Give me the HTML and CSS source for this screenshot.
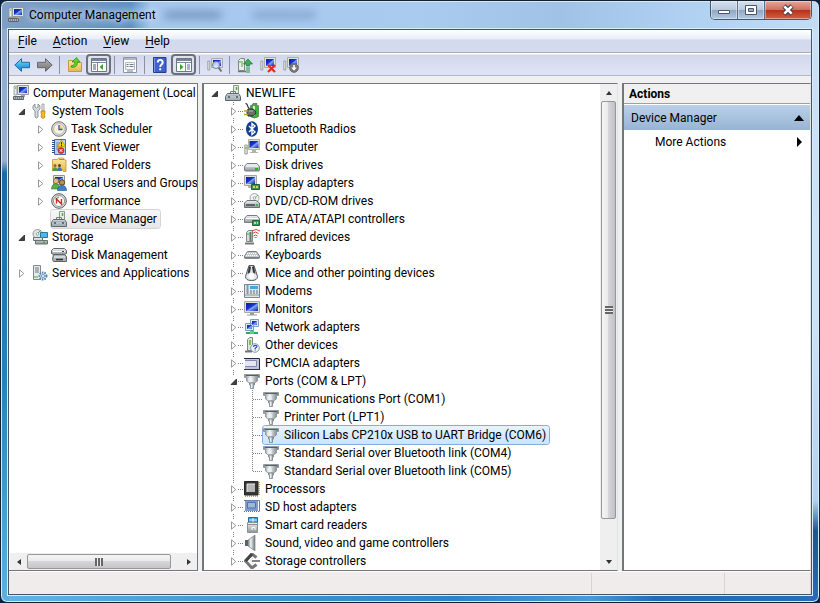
FILE: index.html
```
<!DOCTYPE html>
<html lang="en">
<head>
<meta charset="utf-8">
<title>Computer Management</title>
<link rel="stylesheet" href="styles.css">
</head>
<body>
<svg class="defs" aria-hidden="true">
  <defs>
    <linearGradient id="g-screen" x1="0" y1="0" x2="1" y2="1"><stop offset="0" stop-color="#0a1a9c"/><stop offset=".45" stop-color="#1a35d0"/><stop offset=".55" stop-color="#7fa6f4"/><stop offset="1" stop-color="#1020a8"/></linearGradient>
    <linearGradient id="g-metal" x1="0" y1="0" x2="0" y2="1"><stop offset="0" stop-color="#f4f5f6"/><stop offset="1" stop-color="#8d9499"/></linearGradient>
    <linearGradient id="g-side" x1="0" y1="0" x2="1" y2="0"><stop offset="0" stop-color="#7d878d"/><stop offset=".4" stop-color="#eef2f4"/><stop offset="1" stop-color="#6b757b"/></linearGradient>
    <linearGradient id="g-blue" x1="0" y1="0" x2="0" y2="1"><stop offset="0" stop-color="#9be0fb"/><stop offset=".5" stop-color="#38aeea"/><stop offset="1" stop-color="#1784cc"/></linearGradient>
    <linearGradient id="g-gray" x1="0" y1="0" x2="0" y2="1"><stop offset="0" stop-color="#b5b5b5"/><stop offset="1" stop-color="#6f6f6f"/></linearGradient>
    <linearGradient id="g-gold" x1="0" y1="0" x2="0" y2="1"><stop offset="0" stop-color="#fdeaa4"/><stop offset="1" stop-color="#e5b548"/></linearGradient>
  </defs>
  <symbol id="shut" viewBox="0 0 9 9"><path d="M2.5.8v7.4L6.8 4.5z" fill="#fff" stroke="#9a9a9a"/></symbol>
  <symbol id="open" viewBox="0 0 9 9"><path d="M7.5 2v5.500H2z" fill="#404040" stroke="#222" stroke-width=".8"/></symbol>

  <symbol id="pc" viewBox="0 0 16 16"><path d="M1 1h3v9H1z" fill="#e6e9df" stroke="#8b9090" stroke-width=".7"/><path d="M2 3h1" stroke="#39a42d"/><path d="M4.500.5h11v9h-11z" fill="#e4e4dc" stroke="#9a9a94"/><path d="M6 2h8v6H6z" fill="url(#g-screen)"/><path d="M8 10h4v2H8z" fill="#aaa"/><path d="M.5 11.500h10v3H.5z" fill="#aeb4b8" stroke="#5f676c"/><path d="M2 13h8" stroke="#41494e" stroke-dasharray="1 1"/></symbol>
  <symbol id="tools" viewBox="0 0 16 16"><path d="M3 1v3l1.500 1L6 4V1l2 2v3L6 8v6l-1.500 1L3 14V8L1 6V3z" fill="#d5dadd" stroke="#788087" stroke-width=".8"/><path d="M10 1h2v7h-2z" fill="#eef1f2" stroke="#888" stroke-width=".7"/><path d="M9 8h4v2l-.6 1 .6 3-2 1.500L9 14l.6-3L9 10z" fill="#f5b925" stroke="#c18100" stroke-width=".8"/></symbol>
  <symbol id="clock" viewBox="0 0 16 16"><circle cx="8" cy="8" r="7.300" fill="#d8dbd8" stroke="#6f7471"/><circle cx="8" cy="8" r="5.300" fill="#fbf3dd" stroke="#a9aca9" stroke-width=".7"/><path d="M8 8h4A4 4 0 0 0 8 4z" fill="#f1cf86"/><path d="M8 4v4.500h3.500" fill="none" stroke="#3b5c96" stroke-width="1.300"/></symbol>
  <symbol id="event" viewBox="0 0 16 16"><path d="M3.500.5h11v15h-11z" fill="#b9d1ee" stroke="#4570ab"/><path d="M2.500 1v14" stroke="#2e4f86" stroke-width="3" stroke-dasharray="1 1"/><path d="M5 4h4M5 6h3M5 8h3M5 10h2" stroke="#5f8dc8"/><path d="M10.500 1L14.500 7.500h-8z" fill="#ffd11c" stroke="#c08c00" stroke-width=".7"/><path d="M10.500 3.200v2.300M10.500 6v1" stroke="#222"/><circle cx="10" cy="11.500" r="3" fill="#dc3b32" stroke="#9d1d18" stroke-width=".6"/><path d="M8.700 10.200l2.600 2.600m0-2.600l-2.600 2.600" stroke="#fff"/></symbol>
  <symbol id="shared" viewBox="0 0 16 16"><path d="M1.500 14.500v-12h5l1-1.500h5l1 2h1.500v11.500z" fill="url(#g-gold)" stroke="#c79431" stroke-width=".8"/><path d="M8 2.500h5" stroke="#4c9bde"/><circle cx="4" cy="8.500" r="1.500" fill="#936838"/><circle cx="8.500" cy="8.500" r="1.500" fill="#5c4024"/><path d="M1.500 14c0-5 5-5 5 0z" fill="#47a045"/><path d="M6 14c0-5 5-5 5 0z" fill="#3777ba"/><path d="M1 14.500h11" stroke="#fff"/></symbol>
  <symbol id="users" viewBox="0 0 16 16"><path d="M2.500.5h11v9h-11z" fill="#e2e5df" stroke="#92958f"/><path d="M4 2h8v6H4z" fill="url(#g-screen)"/><circle cx="5" cy="6" r="2.700" fill="#e0b87e" stroke="#80562a" stroke-width=".7"/><circle cx="11" cy="7.500" r="2.700" fill="#c18d50" stroke="#523517" stroke-width=".8"/><path d="M.5 14c0-7 8-7 8.500 0z" fill="#58b04c" stroke="#33752d" stroke-width=".6"/><path d="M6.500 15.500c0-7 9-7 9 0z" fill="#3b81ca" stroke="#1f4f8b" stroke-width=".6"/></symbol>
  <symbol id="perf" viewBox="0 0 16 16"><circle cx="8" cy="8" r="7.300" fill="#e4e4e0" stroke="#555b5d"/><circle cx="8" cy="8" r="5.500" fill="#fff" stroke="#777" stroke-width=".8"/><path d="M5.500 10.500V6l5 5V6" fill="none" stroke="#d02822" stroke-width="1.400"/><path d="M4.500 6L8 4" stroke="#444" stroke-width=".8"/></symbol>
  <symbol id="device" viewBox="0 0 16 16"><path d="M8.500.5h5v9h-5z" fill="#e8eee4" stroke="#90988e"/><path d="M11.500 2v3" stroke="#43b332" stroke-width="1.500"/><path d="M5.500 9V6.500h5V9" fill="none" stroke="#727c81"/><path d="M2.500 8.500h11l2 3v4H.5v-4z" fill="#a9b4b9" stroke="#5d686d"/><path d="M2 9.500h12M1 12h14" stroke="#c3ccd0"/><path d="M4 11v2M12 11v2" stroke="#4b565c" stroke-width="1.500"/></symbol>
  <symbol id="storage" viewBox="0 0 16 16"><circle cx="5.500" cy="5" r="4.500" fill="#e0e6e6" stroke="#909896"/><path d="M5 5L9 1" stroke="#52b546"/><circle cx="5.500" cy="5" r="1.300" fill="#fff" stroke="#777" stroke-width=".6"/><path d="M8.500 3.500h7v5h-7z" fill="#4fb7e4" stroke="#237ba4"/><path d="M1.500 8.500h9v3h-9zM3.500 11.500h12v3.500h-12z" fill="url(#g-metal)" stroke="#697175"/><path d="M11 13.500h2" stroke="#37b52b" stroke-width="2"/></symbol>
  <symbol id="diskmgmt" viewBox="0 0 16 16"><path d="M2.500 1.500h11l2 2v3l-2 1h-11l-2-1v-3z" fill="url(#g-metal)" stroke="#666"/><path d="M2.500 7.500h11l2 2v5h-13l-1-2z" fill="#a9afb3" stroke="#5d6366"/><path d="M2 4.500h12M3 10h11" stroke="#fff"/><path d="M5 12.500h7" stroke="#333" stroke-width="1.500"/><path d="M11 4.500h2" stroke="#444"/></symbol>
  <symbol id="services" viewBox="0 0 16 16"><path d="M1.500.5h7v14h-7z" fill="#e7ebed" stroke="#7e888e"/><path d="M3 3h4M3 5h4M3 7h4" stroke="#6d777c"/><path d="M2 12h4" stroke="#3fae39"/><circle cx="11" cy="11" r="3.500" fill="#d3e7f6" stroke="#5382a6" stroke-width="2" stroke-dasharray="1.500 1"/><circle cx="11" cy="11" r="1.500" fill="#fff" stroke="#5382a6" stroke-width=".8"/></symbol>

  <symbol id="battery" viewBox="0 0 16 16"><path d="M8 1.500h5v-1H9zM6.500 2.500h8v11q-4 3-8 0z" fill="#38b53b" stroke="#51704f" stroke-width=".7"/><path d="M10 3v10" stroke="#c9f5bd" stroke-width="2"/><path d="M1.500.5c3 0 1 4 4 5" fill="none" stroke="#333" stroke-width="1.200"/><path d="M4 6h4c5 1 5 6 0 7H4L3 9.500z" fill="#6b706d" stroke="#252825"/><path d="M5 8h4" stroke="#b5bab7"/><path d="M0 8h4M0 11.500h4" stroke="#c89b22" stroke-width="1.600"/></symbol>
  <symbol id="bluetooth" viewBox="0 0 16 16"><ellipse cx="8" cy="8" rx="6" ry="7.700" fill="#123f91"/><path d="M5 5l6 6-3 2.500v-11L11 5l-6 6" fill="none" stroke="#fff" stroke-width="1.400"/></symbol>
  <symbol id="computer" viewBox="0 0 16 16"><path d="M.8 6h2.500v9H.8z" fill="#dfe7e0" stroke="#8a918d" stroke-width=".8"/><path d="M2 8v2" stroke="#39aa2e"/><path d="M4.500.5h11v10h-11z" fill="#e2e2da" stroke="#b1b1a9"/><path d="M5.500 2h9v7h-9z" fill="url(#g-screen)"/><path d="M8 11h4v2h2v1H6v-1h2z" fill="#b3b3ae"/></symbol>
  <symbol id="drive" viewBox="0 0 16 16"><path d="M3 6.500h10l2.500 3v3.500q0 1-1 1h-13q-1 0-1-1V9.500z" fill="url(#g-metal)" stroke="#777f83"/><path d="M2 9h12" stroke="#fff"/><path d="M11 12h3" stroke="#25b320" stroke-width="2"/></symbol>
  <symbol id="display" viewBox="0 0 16 16"><path d="M.5.500h12v10H.5z" fill="#e0e0da" stroke="#a6a6a0"/><path d="M2 2h9v7H2z" fill="url(#g-screen)"/><path d="M4 11h5v2H4z" fill="#b4b4b0"/><path d="M7.500 9.500h8v5h-8z" fill="#38995b" stroke="#20613a"/><path d="M9 11h2v2H9zM12 11h2v2h-2z" fill="#e5ca63"/></symbol>
  <symbol id="dvd" viewBox="0 0 16 16"><circle cx="10.500" cy="5" r="4.500" fill="#f2f3f3" stroke="#a5a9aa"/><path d="M10.500 5L14 2" stroke="#63bb64"/><circle cx="10.500" cy="5" r="1.300" fill="#fff" stroke="#888" stroke-width=".7"/><path d="M3 7.500h9l3.500 2.500v4.500H.5V10z" fill="url(#g-metal)" stroke="#697276"/><path d="M2 12h9" stroke="#444" stroke-width="1.500"/><path d="M12 12h2" stroke="#25b320" stroke-width="1.500"/></symbol>
  <symbol id="ide" viewBox="0 0 16 16"><path d="M3 4.500h10l2.500 3v4h-15v-4z" fill="url(#g-metal)" stroke="#777f83"/><path d="M2 7.500h12" stroke="#fff"/><path d="M8.500 9.500h7v5h-7z" fill="#3b9561" stroke="#216541"/><path d="M10 11h2v2h-2zM13 11h1v2h-1z" fill="#e1d27a"/></symbol>
  <symbol id="infrared" viewBox="0 0 16 16"><path d="M2.500 3.500l2-2h4v11h-6z" fill="#d8dfdb" stroke="#7e8782"/><path d="M6.500 3v9" stroke="#64766e" stroke-width="2"/><path d="M4 4v2" stroke="#3fae37"/><path d="M1 14.500h9" stroke="#777" stroke-width="2"/><path d="M8 2q4-3 8 0M8.500 4.500q3-3 6 0M9.500 7q2-2 4 0M10.500 9l1-1 1 1" fill="none" stroke="#d64a40"/></symbol>
  <symbol id="keyboard" viewBox="0 0 16 16"><path d="M3.500 4.500h9l3 4.500v2H.5V9z" fill="#c6c9ce" stroke="#777b83"/><path d="M3 6.500h10M2 8.500h12" stroke="#fff" stroke-dasharray="1 1"/><path d="M1 11h14" stroke="#555960"/></symbol>
  <symbol id="mouse" viewBox="0 0 16 16"><path d="M5 .5h5l3.500 11q0 4-6 4t-6-4z" fill="#e1e5e7" stroke="#535b61"/><path d="M5 1l-1.500 8L6 7.500 7 2zM10 1l1.500 8L9 7.500 8 2z" fill="#343a3e"/><circle cx="7.500" cy="11" r="3" fill="#fff"/></symbol>
  <symbol id="modem" viewBox="0 0 16 16"><path d="M.5 1.500h15v13H.5z" fill="#e2e5e8" stroke="#7c868e"/><path d="M3.500 2v9" stroke="#8d979f" stroke-width="2"/><path d="M6 3h8v3H6z" fill="#3ca8de"/><path d="M6 8h8M6 10h8" stroke="#526e83" stroke-dasharray="2 1"/><path d="M1 12h14" stroke="#89949c"/></symbol>
  <symbol id="monitor" viewBox="0 0 16 16"><path d="M.5.500h15v11H.5z" fill="#deded7" stroke="#aaa9a2"/><path d="M2 2h12v8H2z" fill="url(#g-screen)"/><path d="M6 12h4v1.500h3v1H3v-1h3z" fill="#9c9c97"/></symbol>
  <symbol id="network" viewBox="0 0 16 16"><path d="M6.500.5h8v7h-8zM1.500 4.500h8v7h-8z" fill="#e0eaf1" stroke="#829eb6"/><path d="M8 2h5v4H8zM3 6h5v4H3z" fill="url(#g-screen)"/><path d="M8 11v3M2 14h12" stroke="#2da469" stroke-width="2"/><path d="M6 12h4v3H6z" fill="#4cd693"/></symbol>
  <symbol id="other" viewBox="0 0 16 16"><path d="M3.500 2.500l2-2h3v13h-5z" fill="#dde5df" stroke="#7f8982"/><path d="M6 3v5" stroke="#49b93f" stroke-width="1.500"/><path d="M1 14.500h7" stroke="#777" stroke-width="2"/><circle cx="11" cy="11" r="4.300" fill="#eff3fa" stroke="#8b98ab"/><path d="M9.500 10q0-1.700 1.700-1.700 2 0 1.500 1.700l-1.500 1.200v.7m0 .7v1" fill="none" stroke="#2852ab" stroke-width="1.200"/></symbol>
  <symbol id="pcmcia" viewBox="0 0 16 16"><path d="M0 3.500h15.500v11" fill="none" stroke="#28283c"/><path d="M1 4h14v10H1z" fill="#c0c5dc"/><path d="M1 5.500h11.500v6H1" fill="#e4e7f3" stroke="#8389ac"/><path d="M0 14.500h16" stroke="#303047"/></symbol>
  <symbol id="port" viewBox="0 0 16 16"><path d="M.5 1.500h15v3h-2V8l-3 2h-5l-3-2V4.500h-2z" fill="url(#g-side)" stroke="#858e93" stroke-width=".8"/><path d="M2 2.500h12" stroke="#555f64"/><path d="M5 5v4M8 5v4" stroke="#f5f8fa"/><path d="M5.500 10h5v2h-1v3.500h-3V12h-1z" fill="url(#g-side)" stroke="#798388" stroke-width=".8"/></symbol>
  <symbol id="chip" viewBox="0 0 16 16"><path d="M15.200 1v14M1 15.200h14" stroke="#ac842b" stroke-dasharray="1 1"/><path d="M.5.500h13.500v13.500H.5z" fill="#363636" stroke="#262626"/><path d="M3 3h8v8H3z" fill="#b7b7b7"/><path d="M3 11V3h8" fill="none" stroke="#e7e7e7"/></symbol>
  <symbol id="sd" viewBox="0 0 16 16"><path d="M0 1.500h15.500v11" fill="none" stroke="#6281b0"/><path d="M1 2h13v10H1z" fill="#7e9dca"/><path d="M3.500 3.500h8v5.500h-8z" fill="#9db7dc" stroke="#4f73aa"/><path d="M0 12.500h15.500" stroke="#5474a4" stroke-dasharray="1 1"/></symbol>
  <symbol id="card" viewBox="0 0 16 16"><path d="M4.500.5h9v5h-9z" fill="#32a0dc" stroke="#1a70a5"/><path d="M9 1v4M5 3h8" stroke="#e3f6ff"/><path d="M3.500 5.500h10v10h-10z" fill="url(#g-metal)" stroke="#899297"/><path d="M8 13v-2.500h3V13" fill="none" stroke="#fff"/><path d="M4 7.500h9" stroke="#8a9499"/></symbol>
  <symbol id="sound" viewBox="0 0 16 16"><path d="M4 5l7-5v16l-7-5z" fill="url(#g-side)" stroke="#7f878b" stroke-width=".7"/><path d="M1 5h3v6H1z" fill="#59646a"/></symbol>
  <symbol id="storctl" viewBox="0 0 16 16"><path d="M12.500 4.500L8 1 1.500 8 8 15l4.500-3.500" fill="none" stroke="#777" stroke-width="3"/><path d="M8 1L1.500 8" stroke="#444" stroke-width="3"/><path d="M8 8h8" stroke="#838383" stroke-width="2"/><path d="M9 5L6.500 8 9 11" fill="none" stroke="#ddd"/></symbol>

  <symbol id="back" viewBox="0 0 16 16"><path d="M.8 8L7.500 1.700v3.600h8v5.400h-8v3.600z" fill="url(#g-blue)" stroke="#27699c"/></symbol>
  <symbol id="forward" viewBox="0 0 16 16"><path d="M15.200 8L8.500 1.700v3.600h-8v5.400h8v3.600z" fill="url(#g-gray)" stroke="#686868"/></symbol>
  <symbol id="up" viewBox="0 0 16 16"><path d="M1.500 14.500v-11h5l1 2h7v9z" fill="url(#g-gold)" stroke="#c49940"/><path d="M4 9c4-1 4-3 3.500-4H5l4.500-4.500L13 5h-2.500c0 5-4 6-6.500 5z" fill="#5dd12f" stroke="#268812" stroke-width=".7"/></symbol>
  <symbol id="console" viewBox="0 0 16 16"><path d="M.5 1.500h15v13H.5z" fill="#fff" stroke="#697689"/><path d="M1 3h14" stroke="#75849d" stroke-width="2"/><path d="M1 5.500h14M6.500 6v8" stroke="#7d8998"/><path d="M2 8h3M2 10h3M2 12h3" stroke="#475870"/><path d="M12 7v6L8.500 10z" fill="#35a52b"/></symbol>
  <symbol id="actions" viewBox="0 0 16 16"><path d="M.5 1.500h15v13H.5z" fill="#fff" stroke="#697689"/><path d="M1 3h14" stroke="#75849d" stroke-width="2"/><path d="M1 5.500h14M9.500 6v8" stroke="#7d8998"/><path d="M11 8h3M11 10h3M11 12h3" stroke="#3c73b7"/><path d="M4 7v6l3.500-3z" fill="#35a52b"/></symbol>
  <symbol id="props" viewBox="0 0 16 16"><path d="M1.500.5h13v15h-13z" fill="#fff" stroke="#8b949f"/><path d="M2 2h12" stroke="#aeb8c7" stroke-width="2"/><path d="M3.500 5.500h9v7h-9z" fill="#f7f7f7" stroke="#b4bac2"/><path d="M4.500 7.500h2M4.500 9.500h2M7.500 7.500h4M7.500 9.500h4M5 14h6" stroke="#6e7d90"/></symbol>
  <symbol id="help" viewBox="0 0 16 16"><path d="M1.500.5h12.500v15H1.500z" fill="#3f63ca" stroke="#263c8c"/><path d="M2.500 1v14" stroke="#7a98e7"/><path d="M5.700 5.500c0-3.500 5-3.500 5 0 0 2.200-2.500 2-2.500 4.500m0 1.300v2" fill="none" stroke="#fff" stroke-width="1.900"/></symbol>
  <symbol id="scan" viewBox="0 0 16 16"><path d="M.8 4h2v9h-2z" fill="#e1e5de" stroke="#858b87" stroke-width=".7"/><path d="M4.500 1.500h11v9h-11z" fill="#e4e4dc" stroke="#aaa"/><path d="M6 3h8v6H6z" fill="url(#g-screen)"/><circle cx="9" cy="8" r="3.500" fill="#dceefc" fill-opacity=".8" stroke="#758695"/><path d="M11.500 10.500l3 4" stroke="#6f7377" stroke-width="2"/></symbol>
  <symbol id="update" viewBox="0 0 16 16"><path d="M1.500 3.500l2-2h4v12h-6z" fill="#e9eee8" stroke="#7e8881"/><path d="M5 4v6M3 4v2" stroke="#4eaa45"/><path d="M1 14.500h8" stroke="#777" stroke-width="1.500"/><path d="M11 2l4.500 5h-3v2H9.500V7h-3z" fill="#3baf56" stroke="#177432" stroke-width=".7"/><path d="M9 11h4M9 13h4M9 15h4" stroke="#24934b"/></symbol>
  <symbol id="remove" viewBox="0 0 16 16"><path d="M.8 4h2v9h-2z" fill="#e1e5de" stroke="#858b87" stroke-width=".7"/><path d="M4.500.5h11v10h-11z" fill="#e4e4dc" stroke="#aaa"/><path d="M6 2h8v7H6z" fill="url(#g-screen)"/><path d="M8 8l7 7m0-7l-7 7" stroke="#e02b20" stroke-width="2.200"/></symbol>
  <symbol id="disable" viewBox="0 0 16 16"><path d="M.8 4h2v9h-2z" fill="#e1e5de" stroke="#858b87" stroke-width=".7"/><path d="M4.500.5h11v10h-11z" fill="#e4e4dc" stroke="#aaa"/><path d="M6 2h8v7H6z" fill="url(#g-screen)"/><circle cx="11" cy="11" r="4.400" fill="#777" stroke="#666" stroke-width=".8"/><path d="M10.200 8h1.600v2.500h2L11 13.800 8.200 10.500h2z" fill="#fff"/></symbol>
</svg>

<div class="window">
  <header class="titlebar">
    <svg class="icon"><use href="#pc"/></svg>
    <h1 class="title">Computer Management</h1>
    <span class="ghost" aria-hidden="true"><i class="smudge smudge-a"></i><i class="smudge smudge-b"></i></span>
    <div class="controls">
      <button class="control" aria-label="Minimize"><svg class="glyph" viewBox="0 0 14 12"><path d="M1.500 6.500h11v3h-11z" fill="#fff" stroke="#4d5668"/></svg></button>
      <button class="control" aria-label="Maximize"><svg class="glyph" viewBox="0 0 14 12"><path d="M1.500 1.500h11v9h-11z" fill="#fff" stroke="#4d5668"/><path d="M4.500 4.500h5v3h-5z" fill="#93aecb" stroke="#4d5668"/></svg></button>
      <button class="control control-close" aria-label="Close"><svg class="glyph" viewBox="0 0 14 12"><path d="M3 2l8 8m0-8l-8 8" stroke="#4b3c4a" stroke-width="4.600"/><path d="M3.300 2.300l7.400 7.400m0-7.400l-7.400 7.400" stroke="#fff" stroke-width="2.600"/></svg></button>
    </div>
  </header>

  <div class="client">
    <nav class="menubar">
      <button class="menu"><u>F</u>ile</button>
      <button class="menu"><u>A</u>ction</button>
      <button class="menu"><u>V</u>iew</button>
      <button class="menu"><u>H</u>elp</button>
    </nav>
    <div class="toolbar">
      <button class="tool" aria-label="Back"><svg class="icon"><use href="#back"/></svg></button>
      <button class="tool" aria-label="Forward"><svg class="icon"><use href="#forward"/></svg></button>
      <span class="sep"></span>
      <button class="tool" aria-label="Up"><svg class="icon"><use href="#up"/></svg></button>
      <button class="tool tool-on" aria-label="Show console tree"><svg class="icon"><use href="#console"/></svg></button>
      <span class="sep"></span>
      <button class="tool" aria-label="Properties"><svg class="icon"><use href="#props"/></svg></button>
      <span class="sep"></span>
      <button class="tool" aria-label="Help"><svg class="icon"><use href="#help"/></svg></button>
      <button class="tool tool-on" aria-label="Show action pane"><svg class="icon"><use href="#actions"/></svg></button>
      <span class="sep"></span>
      <button class="tool" aria-label="Scan for hardware changes"><svg class="icon"><use href="#scan"/></svg></button>
      <span class="sep"></span>
      <button class="tool" aria-label="Update driver"><svg class="icon"><use href="#update"/></svg></button>
      <button class="tool" aria-label="Uninstall"><svg class="icon"><use href="#remove"/></svg></button>
      <button class="tool" aria-label="Disable"><svg class="icon"><use href="#disable"/></svg></button>
    </div>

    <main class="panes">
      <section class="pane pane-console">
        <ul class="tree console">
          <li>
            <div class="row"><svg class="icon"><use href="#pc"/></svg><span class="label">Computer Management (Local</span></div>
            <ul>
              <li>
                <div class="row"><button class="toggle" aria-label="Collapse"><svg class="arrow"><use href="#open"/></svg></button><svg class="icon"><use href="#tools"/></svg><span class="label">System Tools</span></div>
                <ul>
                  <li><div class="row"><button class="toggle" aria-label="Expand"><svg class="arrow"><use href="#shut"/></svg></button><svg class="icon"><use href="#clock"/></svg><span class="label">Task Scheduler</span></div></li>
                  <li><div class="row"><button class="toggle" aria-label="Expand"><svg class="arrow"><use href="#shut"/></svg></button><svg class="icon"><use href="#event"/></svg><span class="label">Event Viewer</span></div></li>
                  <li><div class="row"><button class="toggle" aria-label="Expand"><svg class="arrow"><use href="#shut"/></svg></button><svg class="icon"><use href="#shared"/></svg><span class="label">Shared Folders</span></div></li>
                  <li><div class="row"><button class="toggle" aria-label="Expand"><svg class="arrow"><use href="#shut"/></svg></button><svg class="icon"><use href="#users"/></svg><span class="label">Local Users and Groups</span></div></li>
                  <li><div class="row"><button class="toggle" aria-label="Expand"><svg class="arrow"><use href="#shut"/></svg></button><svg class="icon"><use href="#perf"/></svg><span class="label">Performance</span></div></li>
                  <li><div class="row"><span class="toggle"></span><span class="item item-idle"><svg class="icon"><use href="#device"/></svg><span class="label">Device Manager</span></span></div></li>
                </ul>
              </li>
              <li>
                <div class="row"><button class="toggle" aria-label="Collapse"><svg class="arrow"><use href="#open"/></svg></button><svg class="icon"><use href="#storage"/></svg><span class="label">Storage</span></div>
                <ul>
                  <li><div class="row"><span class="toggle"></span><svg class="icon"><use href="#diskmgmt"/></svg><span class="label">Disk Management</span></div></li>
                </ul>
              </li>
              <li><div class="row"><button class="toggle" aria-label="Expand"><svg class="arrow"><use href="#shut"/></svg></button><svg class="icon"><use href="#services"/></svg><span class="label">Services and Applications</span></div></li>
            </ul>
          </li>
        </ul>
        <div class="scroll scroll-x">
          <button class="nudge nudge-left" aria-label="Scroll left"></button>
          <div class="thumb"><i class="grip"></i></div>
          <button class="nudge nudge-right" aria-label="Scroll right"></button>
        </div>
      </section>

      <section class="pane pane-devices">
        <ul class="tree devices">
          <li>
            <div class="row"><button class="toggle" aria-label="Collapse"><svg class="arrow"><use href="#open"/></svg></button><svg class="icon"><use href="#device"/></svg><span class="label">NEWLIFE</span></div>
            <ul>
              <li><div class="row"><button class="toggle" aria-label="Expand"><svg class="arrow"><use href="#shut"/></svg></button><svg class="icon"><use href="#battery"/></svg><span class="label">Batteries</span></div></li>
              <li><div class="row"><button class="toggle" aria-label="Expand"><svg class="arrow"><use href="#shut"/></svg></button><svg class="icon"><use href="#bluetooth"/></svg><span class="label">Bluetooth Radios</span></div></li>
              <li><div class="row"><button class="toggle" aria-label="Expand"><svg class="arrow"><use href="#shut"/></svg></button><svg class="icon"><use href="#computer"/></svg><span class="label">Computer</span></div></li>
              <li><div class="row"><button class="toggle" aria-label="Expand"><svg class="arrow"><use href="#shut"/></svg></button><svg class="icon"><use href="#drive"/></svg><span class="label">Disk drives</span></div></li>
              <li><div class="row"><button class="toggle" aria-label="Expand"><svg class="arrow"><use href="#shut"/></svg></button><svg class="icon"><use href="#display"/></svg><span class="label">Display adapters</span></div></li>
              <li><div class="row"><button class="toggle" aria-label="Expand"><svg class="arrow"><use href="#shut"/></svg></button><svg class="icon"><use href="#dvd"/></svg><span class="label">DVD/CD-ROM drives</span></div></li>
              <li><div class="row"><button class="toggle" aria-label="Expand"><svg class="arrow"><use href="#shut"/></svg></button><svg class="icon"><use href="#ide"/></svg><span class="label">IDE ATA/ATAPI controllers</span></div></li>
              <li><div class="row"><button class="toggle" aria-label="Expand"><svg class="arrow"><use href="#shut"/></svg></button><svg class="icon"><use href="#infrared"/></svg><span class="label">Infrared devices</span></div></li>
              <li><div class="row"><button class="toggle" aria-label="Expand"><svg class="arrow"><use href="#shut"/></svg></button><svg class="icon"><use href="#keyboard"/></svg><span class="label">Keyboards</span></div></li>
              <li><div class="row"><button class="toggle" aria-label="Expand"><svg class="arrow"><use href="#shut"/></svg></button><svg class="icon"><use href="#mouse"/></svg><span class="label">Mice and other pointing devices</span></div></li>
              <li><div class="row"><button class="toggle" aria-label="Expand"><svg class="arrow"><use href="#shut"/></svg></button><svg class="icon"><use href="#modem"/></svg><span class="label">Modems</span></div></li>
              <li><div class="row"><button class="toggle" aria-label="Expand"><svg class="arrow"><use href="#shut"/></svg></button><svg class="icon"><use href="#monitor"/></svg><span class="label">Monitors</span></div></li>
              <li><div class="row"><button class="toggle" aria-label="Expand"><svg class="arrow"><use href="#shut"/></svg></button><svg class="icon"><use href="#network"/></svg><span class="label">Network adapters</span></div></li>
              <li><div class="row"><button class="toggle" aria-label="Expand"><svg class="arrow"><use href="#shut"/></svg></button><svg class="icon"><use href="#other"/></svg><span class="label">Other devices</span></div></li>
              <li><div class="row"><button class="toggle" aria-label="Expand"><svg class="arrow"><use href="#shut"/></svg></button><svg class="icon"><use href="#pcmcia"/></svg><span class="label">PCMCIA adapters</span></div></li>
              <li>
                <div class="row"><button class="toggle" aria-label="Collapse"><svg class="arrow"><use href="#open"/></svg></button><svg class="icon"><use href="#port"/></svg><span class="label">Ports (COM &amp; LPT)</span></div>
                <ul>
                  <li><div class="row"><span class="toggle"></span><svg class="icon"><use href="#port"/></svg><span class="label">Communications Port (COM1)</span></div></li>
                  <li><div class="row"><span class="toggle"></span><svg class="icon"><use href="#port"/></svg><span class="label">Printer Port (LPT1)</span></div></li>
                  <li><div class="row"><span class="toggle"></span><span class="item item-selected"><svg class="icon"><use href="#port"/></svg><span class="label">Silicon Labs CP210x USB to UART Bridge (COM6)</span></span></div></li>
                  <li><div class="row"><span class="toggle"></span><svg class="icon"><use href="#port"/></svg><span class="label">Standard Serial over Bluetooth link (COM4)</span></div></li>
                  <li><div class="row"><span class="toggle"></span><svg class="icon"><use href="#port"/></svg><span class="label">Standard Serial over Bluetooth link (COM5)</span></div></li>
                </ul>
              </li>
              <li><div class="row"><button class="toggle" aria-label="Expand"><svg class="arrow"><use href="#shut"/></svg></button><svg class="icon"><use href="#chip"/></svg><span class="label">Processors</span></div></li>
              <li><div class="row"><button class="toggle" aria-label="Expand"><svg class="arrow"><use href="#shut"/></svg></button><svg class="icon"><use href="#sd"/></svg><span class="label">SD host adapters</span></div></li>
              <li><div class="row"><button class="toggle" aria-label="Expand"><svg class="arrow"><use href="#shut"/></svg></button><svg class="icon"><use href="#card"/></svg><span class="label">Smart card readers</span></div></li>
              <li><div class="row"><button class="toggle" aria-label="Expand"><svg class="arrow"><use href="#shut"/></svg></button><svg class="icon"><use href="#sound"/></svg><span class="label">Sound, video and game controllers</span></div></li>
              <li><div class="row"><button class="toggle" aria-label="Expand"><svg class="arrow"><use href="#shut"/></svg></button><svg class="icon"><use href="#storctl"/></svg><span class="label">Storage controllers</span></div></li>
            </ul>
          </li>
        </ul>
        <div class="scroll scroll-y">
          <button class="nudge nudge-up" aria-label="Scroll up"></button>
          <div class="thumb"><i class="grip"></i></div>
          <button class="nudge nudge-down" aria-label="Scroll down"></button>
        </div>
      </section>

      <section class="pane pane-actions">
        <h2 class="actions-title">Actions</h2>
        <button class="group"><span>Device Manager</span><svg class="mark" viewBox="0 0 10 10"><path d="M5 2l5 6H0z"/></svg></button>
        <button class="action"><span>More Actions</span><svg class="mark" viewBox="0 0 10 10"><path d="M3 0l5 5-5 5z"/></svg></button>
      </section>
    </main>

    <footer class="status"><span class="cell cell-main"></span><span class="cell"></span><span class="cell cell-end"></span></footer>
  </div>
</div>
</body>
</html>
```
FILE: styles.css
```
* { box-sizing: border-box; }

body {
  margin: 0;
  background: #0b2240;
  color: #000;
  font: 12px/18px Roboto, "Noto Sans", sans-serif;
}

button {
  margin: 0;
  padding: 0;
  border: 0;
  background: none;
  color: inherit;
  font: inherit;
}

ul { margin: 0; padding: 0; list-style: none; }

.defs { position: absolute; width: 0; height: 0; }
.icon { display: block; flex: none; width: 16px; height: 16px; }

/* window frame */
.window {
  display: flex;
  flex-direction: column;
  min-height: 100vh;
  padding: 0 7px 7px;
  border: 1px solid #14202f;
  border-radius: 7px;
  box-shadow: inset 0 0 0 1px #d6ebfa;
  background:
    linear-gradient(90deg, #7f9fc6 0, #6f97c3 90px, #5f92c6 130px, #a6c8ee 150px, #a9cbf0 420px, #9fc2e6 560px, #afd0f1 680px, #c3dcf4 100%) 0 0 / 100% 28px no-repeat,
    linear-gradient(#8fabcf 0, #97aed0 160px, #1d6aa0 172px, #2584b4 380px, #5db2dd 100%) 0 0 / 8px 100% no-repeat,
    linear-gradient(#c6def5 0, #cfe3f8 300px, #b3d1ee 500px, #1f568f 530px, #2a6cb5 100%) 100% 0 / 8px 100% no-repeat,
    linear-gradient(90deg, #64b5e0 0, #3f97cd 30%, #2c84c8 55%, #4a9ad5 72%, #236cb4 80%, #2a6cb5 100%);
}

.titlebar { display: flex; align-items: center; height: 28px; }
.title {
  margin: 0 0 0 5px;
  font-size: 12px;
  font-weight: 400;
  text-shadow: 0 0 6px #dbe8f6, 0 0 8px #dbe8f6;
}
.ghost { display: flex; flex: 1; gap: 30px; padding-left: 8px; }
.smudge { height: 8px; border-radius: 4px; background: #56789e; filter: blur(4px); opacity: .6; }
.smudge-a { width: 58px; }
.smudge-b { width: 64px; opacity: .4; }

.controls {
  display: flex;
  align-self: flex-start;
  border: 1px solid #46566c;
  border-top: 0;
  border-radius: 0 0 5px 5px;
  overflow: hidden;
}
.control {
  display: grid;
  place-items: center;
  width: 27px;
  height: 18px;
  border-right: 1px solid #5c6d84;
  background: linear-gradient(#d4e0ee 0, #b9cade 48%, #8ea5c0 50%, #b2cbe2 100%);
  box-shadow: inset 0 0 0 1px #ffffff66;
}
.control-close {
  width: 46px;
  border-right: 0;
  background: linear-gradient(#e5a79c 0, #d0705f 48%, #b5301c 50%, #d2613c 100%);
}
.glyph { width: 14px; height: 12px; }

/* client area */
.client {
  display: flex;
  flex: 1;
  flex-direction: column;
  border: 1px solid #42566c;
  background: #f0f0f0;
  box-shadow: 0 0 0 1px #d9ecfb;
}

.menubar {
  display: flex;
  gap: 16px;
  height: 22px;
  padding-left: 9px;
  background: linear-gradient(#fff 0, #e9edf6 42%, #d3daed 44%, #d5daee 100%);
}
.menu { line-height: 22px; }
.menu u { text-underline-offset: 2px; }

.toolbar {
  display: flex;
  align-items: center;
  height: 24px;
  padding: 1px 0 0 1px;
  border-top: 1px solid #b1adab;
  border-bottom: 1px solid #b3b6cf;
  background: linear-gradient(#fff 0, #fff 1px, #d2d8ec 2px, #dfe4f5 100%);
}
.tool {
  display: grid;
  place-items: center;
  width: 23px;
  height: 21px;
  border-radius: 4px;
}
.tool-on { width: 25px; border: 2px solid #6c7180; background: #dfe2ea; }
.sep { width: 1px; height: 18px; margin: 0 3px; background: #8c90a0; }

/* panes */
.panes {
  display: grid;
  flex: 1;
  grid-template-columns: minmax(0, 189fr) minmax(0, 416fr) minmax(0, 189fr);
  gap: 4px;
  padding: 7px 0 0;
}
.pane {
  display: flex;
  min-width: 0;
  border: 1px solid #73777c;
  background: #fff;
  overflow: hidden;
}
.pane-console { flex-direction: column; border-left: 0; }
.pane-devices { border-width: 1px 1px 1px 2px; border-right-color: #e3e3e3; }
.pane-actions { flex-direction: column; border-width: 1px 1px 1px 2px; border-right-color: #e3e3e3; }

.tree { flex: 1; min-width: 0; }
.row { display: flex; align-items: center; height: 18px; white-space: nowrap; }
.toggle { display: flex; flex: none; align-items: center; width: 19px; height: 18px; padding-left: 4px; }
.arrow { display: block; width: 9px; height: 13px; background: #fff; }
.label { padding-left: 5px; }
.item { display: flex; align-items: center; height: 18px; padding-right: 3px; border-radius: 3px; }
.item-idle { background: linear-gradient(#f8f8f8, #e6e6e6); box-shadow: 0 0 0 1px #d4d4d4; }
.item-selected { background: linear-gradient(#e9f3fe, #cde3fd); box-shadow: 0 0 0 1px #84acdd; }

.console { padding-left: 4px; }
.console ul ul { padding-left: 19px; }
.console .label { padding-left: 4px; }

/* dotted guide lines of the device tree */
.devices { padding-left: 2px; }
.devices ul { padding-left: 19px; }
.devices ul > li { background: repeating-linear-gradient(#808080 0 1px, #fff 1px 2px) 8px 0 / 1px 100% no-repeat; }
.devices ul > li:last-child { background-size: 1px 10px; }
.devices ul .toggle { background: repeating-linear-gradient(90deg, #808080 0 1px, #fff 1px 2px) 9px 9px / 10px 1px no-repeat; }

/* scroll bars */
.scroll { display: flex; flex: none; background: #efefef; }
.scroll-x { height: 17px; margin-left: 1px; }
.scroll-y { flex-direction: column; width: 17px; }
.nudge { display: grid; flex: none; place-items: center; width: 17px; height: 17px; }
.nudge::before { content: ""; border: 4px solid transparent; }
.nudge-left::before { border-width: 3px 4px 3px 0; border-right-color: #333; }
.nudge-right::before { border-width: 3px 0 3px 4px; border-left-color: #333; }
.nudge-up::before { border-width: 0 3px 4px; border-bottom-color: #333; }
.nudge-down::before { border-width: 4px 3px 0; border-top-color: #333; }
.thumb { display: grid; place-items: center; border: 1px solid #979797; border-radius: 2px; }
.scroll-x .thumb { flex: 0 0 77%; height: 15px; margin: 1px 0; background: linear-gradient(#f5f5f5 0, #e9e9eb 48%, #d6d6d9 50%, #c6c6c9 100%); }
.scroll-y .thumb { flex: 0 0 86%; width: 15px; margin: 0 1px; background: linear-gradient(90deg, #f5f5f5 0, #e9e9eb 48%, #d6d6d9 50%, #c0c0c6 100%); }
.scroll-x .nudge-right { margin-left: auto; }
.scroll-y .nudge-down { margin-top: auto; }
.grip { width: 8px; height: 8px; }
.scroll-x .grip { background: repeating-linear-gradient(90deg, #666 0 2px, #eee 2px 3px); }
.scroll-y .grip { background: repeating-linear-gradient(#666 0 2px, #eee 2px 3px); }

/* actions pane */
.actions-title {
  margin: 0;
  padding: 1px 5px 0;
  border-bottom: 1px solid #a0a0a0;
  background: #f0f0f0;
  font-size: 12px;
  font-weight: 700;
  line-height: 18px;
}
.group, .action {
  display: flex;
  align-items: center;
  justify-content: space-between;
  height: 25px;
  padding: 0 6px 0 7px;
}
.group { margin-top: 1px; background: linear-gradient(#b9d0e9, #98b4d4); }
.action { height: 24px; padding-left: 31px; }
.mark { width: 10px; height: 10px; }

/* status bar */
.status { display: flex; height: 23px; padding-top: 1px; background: #f0ecec; border-top: 1px solid #fff; }
.cell { width: 133px; border-right: 1px solid #d7d5d5; }
.cell-main { flex: 1; }
.cell-end { width: 86px; }
```
